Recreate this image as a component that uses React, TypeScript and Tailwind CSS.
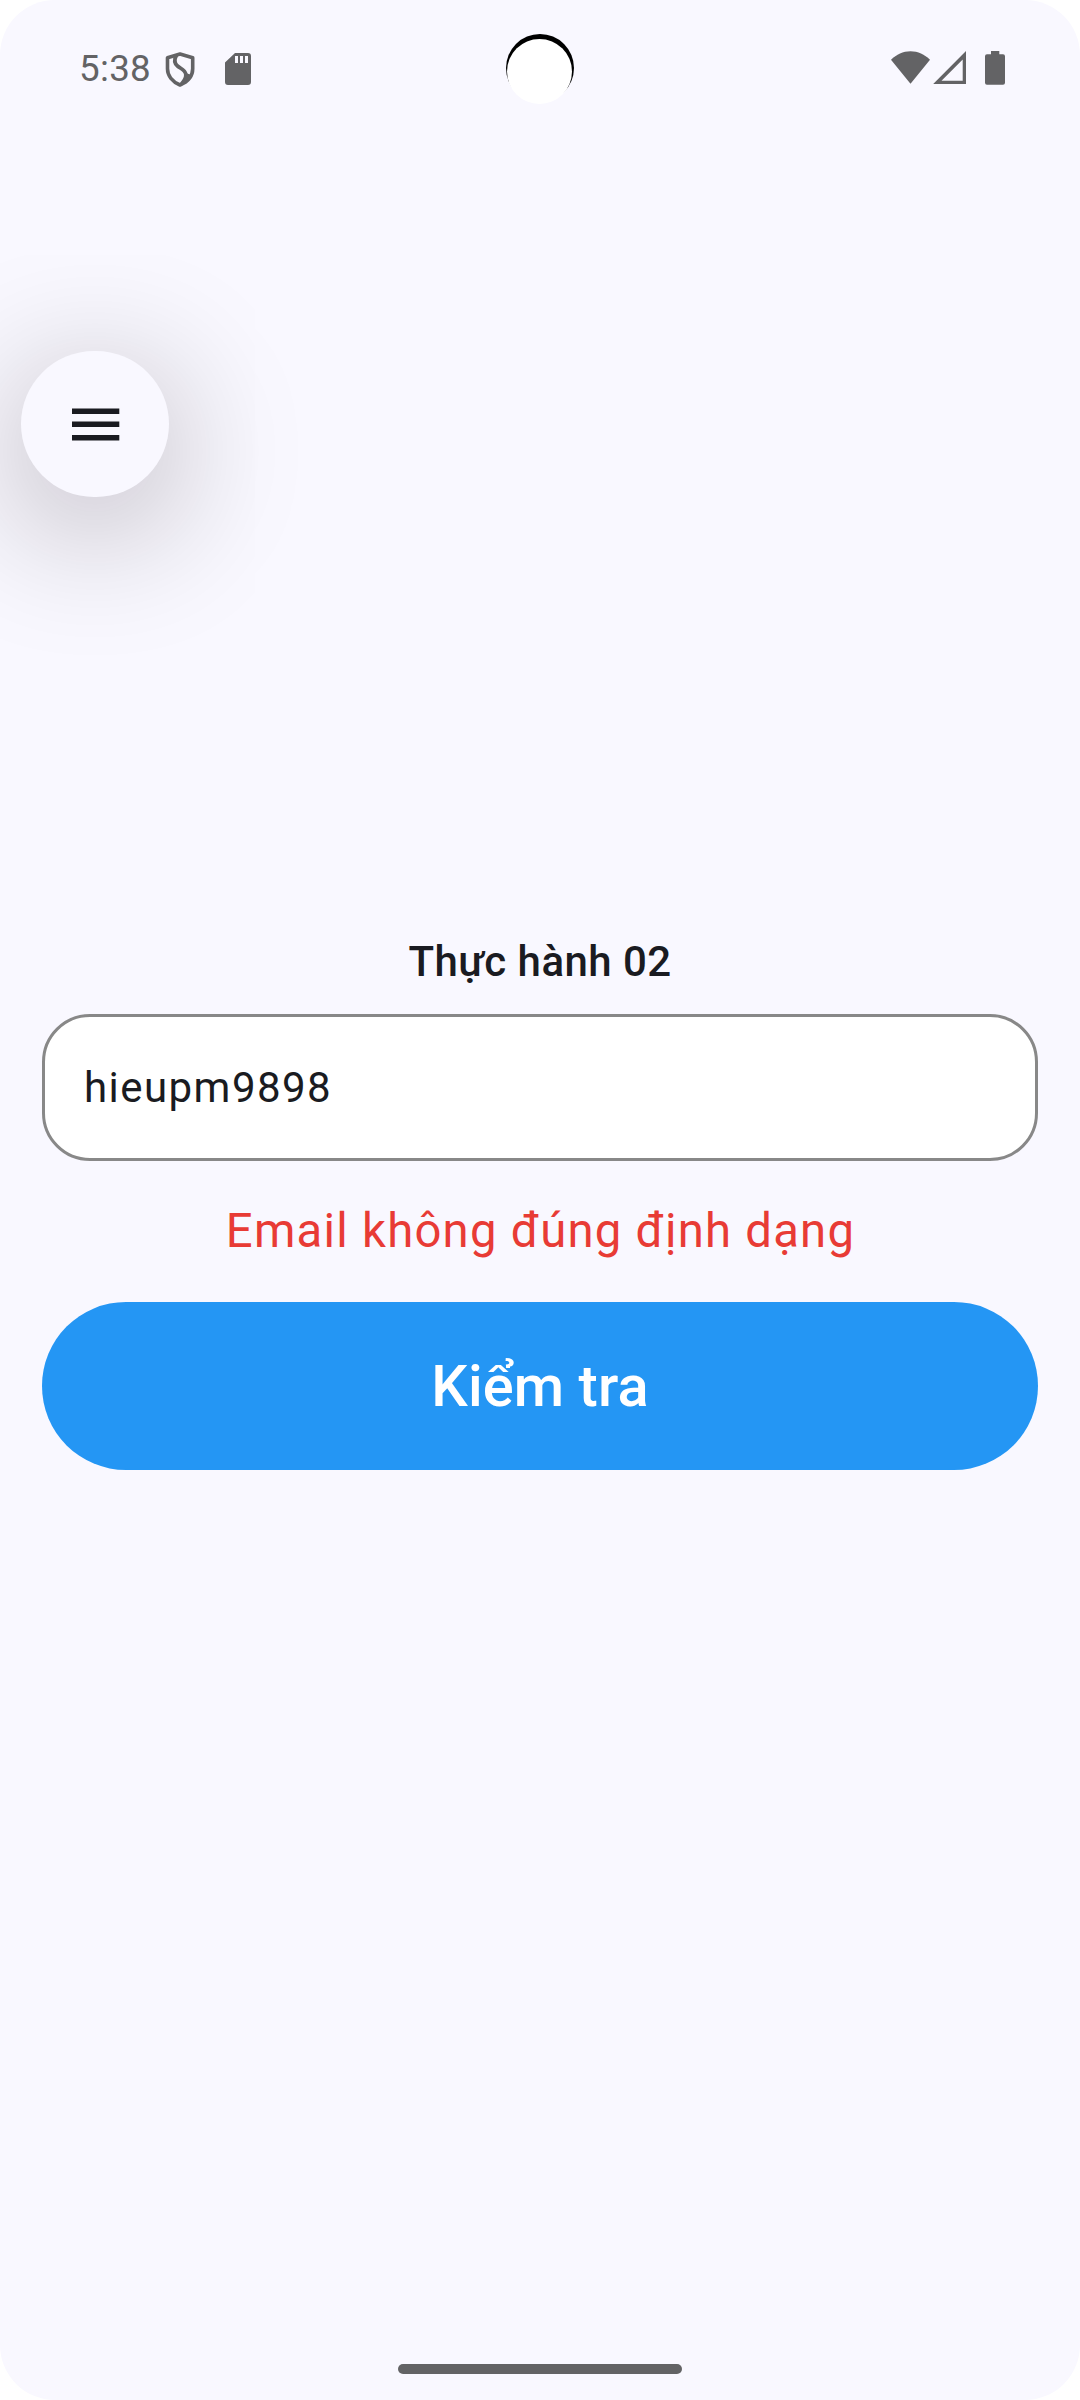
import React from "react";

function StatusBar() {
  return (
    <header className="relative flex h-[136px] items-start justify-between pl-[79px] pr-[75px] text-[#636365]">
      <div className="flex items-start pt-[47px]">
        <span className="w-[73px] text-[36.75px] leading-[43px] tracking-[0.3px]">5:38</span>
        <svg className="ml-[13px] mt-[5px] h-[35px] w-[30px]" viewBox="0 0 30 35" fill="none" stroke="currentColor" strokeWidth="3.6">
          <path d="M15 2 2.500 5.800v11C2.500 23.800 7.500 29.800 15 33c7.800-3.200 12.700-9.200 12.700-16.200v-11Z" strokeLinejoin="round" />
          <path d="M11.500 3C8.800 8 9.500 11.500 12.500 14c3 2.500 7.500 4 8.300 8 .6 3.500-1.500 7-4.300 10" strokeWidth="3.800" />
          <path d="M19.500 20.500c2 3 1 7-3 12 4-2.500 7-6 8.500-10Z" fill="currentColor" stroke="none" />
        </svg>
        <svg className="ml-[30px] mt-[6px] h-[32px] w-[26px]" viewBox="0 0 26 32" fill="currentColor">
          <path fillRule="evenodd" d="M10 0h13a3 3 0 0 1 3 3v26a3 3 0 0 1-3 3H3a3 3 0 0 1-3-3V9.500ZM10 3v7h3V3Zm5 0v7h3V3Zm5 0v7h3V3Z" />
        </svg>
      </div>

      <div className="absolute left-[506px] top-[34px] size-[68px] rounded-full bg-black">
        <div className="absolute left-[0.700px] top-[5px] size-[65.400px] rounded-full bg-white" />
      </div>

      <div className="flex items-start pt-[51px]">
        <svg className="h-[33px] w-[39px]" viewBox="0 0 39 33" fill="currentColor">
          <path d="M0 8.700C5.500 3.300 12 .2 19.500.2S33.500 3.300 39 8.700L19.500 32.700Z" />
        </svg>
        <svg className="ml-[3px] h-[33px] w-[33px]" viewBox="0 0 33 33" fill="currentColor">
          <path fillRule="evenodd" d="M33 0v33H.2ZM29.700 8.500 8.500 29.700h21.200Z" />
        </svg>
        <svg className="ml-[19px] h-[34px] w-[20px]" viewBox="0 0 20 34" fill="currentColor">
          <path d="M6 0h8.300v3.300H18a2 2 0 0 1 2 2V31.700a2 2 0 0 1-2 2H2a2 2 0 0 1-2-2V5.300a2 2 0 0 1 2-2h4Z" />
        </svg>
      </div>
    </header>
  );
}

function MenuButton() {
  return (
    <button
      aria-label="Menu"
      className="ml-[21px] mt-[215px] flex h-[146px] w-[148px] items-center justify-center rounded-[73px] bg-[#f9f8ff] pl-[1px] pt-px shadow-[0_27px_140px_rgba(18,4,8,0.320)]"
    >
      <svg className="h-[33px] w-[48px]" viewBox="0 0 48 33" fill="#1a1b21">
        <path d="M0 .500h47.300V6H0ZM0 13.600h47.300v5.500H0ZM0 26.900h47.300v5.500H0Z" />
      </svg>
    </button>
  );
}

export default function App() {
  return (
    <div className="h-[2400px] w-[1080px] overflow-hidden bg-white font-[Roboto,sans-serif]">
      <div className="flex h-full flex-col overflow-hidden rounded-[55px] bg-[#f9f8ff]">
        <StatusBar />
        <MenuButton />
        <main className="flex flex-col px-[42px] pt-[433px] text-[#1a1b21]">
          <h1 className="h-[63px] whitespace-nowrap text-center text-[42px] leading-[63px] font-medium tracking-[0.440px]">
            Thực hành 02
          </h1>
          <input
            defaultValue="hieupm9898"
            className="mt-[21px] block h-[147px] w-full rounded-[48px] border-[3px] border-[#888888] bg-white px-[39px] text-[42px] tracking-[1.450px] outline-none"
          />
          <p className="mt-[39px] h-[63px] whitespace-nowrap pl-[1px] text-center text-[47.250px] leading-[63px] tracking-[1.240px] text-[#e83b35]">
            Email không đúng định dạng
          </p>
          <button className="mt-[39px] h-[168px] w-full rounded-[84px] bg-[#2496f4] text-[57.750px] font-medium tracking-[0.100px] text-white">
            Kiểm tra
          </button>
        </main>
        <footer className="mt-auto flex justify-center pb-[26px]">
          <div className="h-[10px] w-[284px] rounded-[5px] bg-[#636365]" />
        </footer>
      </div>
    </div>
  );
}
